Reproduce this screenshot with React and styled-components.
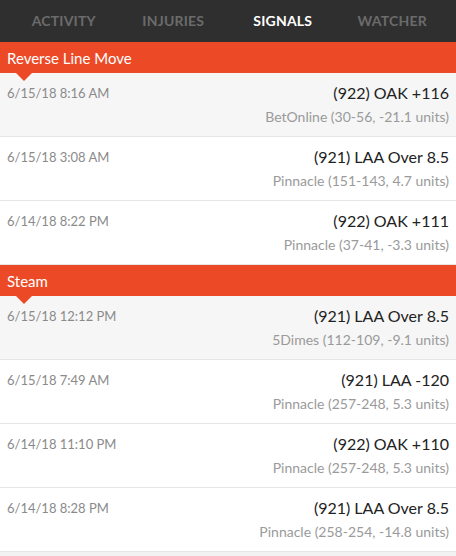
import React from "react";
import styled, { createGlobalStyle } from "styled-components";

const Global = createGlobalStyle`
  html, body { margin: 0; padding: 0; background: #f2f2f2; }
  body { font-family: "Lato", "Open Sans", sans-serif; -webkit-font-smoothing: antialiased; }
`;

const Page = styled.div`
  width: 456px;
  height: 556px;
  overflow: hidden;
  background: #f2f2f2;
`;

const TabBar = styled.nav`
  height: 42px;
  background: #2f2f2f;
  display: grid;
  grid-template-columns: repeat(4, 1fr);
  padding: 0 9px;
  box-sizing: border-box;
`;

const Tab = styled.div`
  display: flex;
  align-items: center;
  justify-content: center;
  font-size: 14px;
  font-weight: 700;
  letter-spacing: 0.2px;
  color: ${(p) => (p.$active ? "#ffffff" : "#6b6b6b")};
  text-transform: uppercase;
  padding-bottom: 2px;
`;

const SectionHeader = styled.div`
  position: relative;
  height: 31px;
  background: #ec4a26;
  color: #fff;
  font-size: 15px;
  display: flex;
  align-items: center;
  padding: 0 7px;
  z-index: 1;
  &::after {
    content: "";
    position: absolute;
    left: 16px;
    bottom: -8px;
    border-left: 8px solid transparent;
    border-right: 8px solid transparent;
    border-top: 8px solid #ec4a26;
  }
`;

const Row = styled.div`
  height: 63px;
  border-bottom: 1px solid #e6e6e6;
  background: ${(p) => (p.$highlight ? "#f6f6f6" : "#ffffff")};
  display: flex;
  justify-content: space-between;
  padding: 0 7px;
`;

const Time = styled.div`
  font-size: 13px;
  color: #8a8a8a;
  margin-top: 12px;
`;

const Right = styled.div`
  display: flex;
  flex-direction: column;
  align-items: flex-end;
  margin-top: 10px;
`;

const Pick = styled.div`
  font-size: 16px;
  color: #222;
  line-height: 20px;
`;

const Book = styled.div`
  font-size: 14px;
  color: #9a9a9a;
  line-height: 18px;
  margin-top: 5px;
`;

const sections = [
  {
    title: "Reverse Line Move",
    rows: [
      ["6/15/18 8:16 AM", "(922) OAK +116", "BetOnline (30-56, -21.1 units)"],
      ["6/15/18 3:08 AM", "(921) LAA Over 8.5", "Pinnacle (151-143, 4.7 units)"],
      ["6/14/18 8:22 PM", "(922) OAK +111", "Pinnacle (37-41, -3.3 units)"],
    ],
  },
  {
    title: "Steam",
    rows: [
      ["6/15/18 12:12 PM", "(921) LAA Over 8.5", "5Dimes (112-109, -9.1 units)"],
      ["6/15/18 7:49 AM", "(921) LAA -120", "Pinnacle (257-248, 5.3 units)"],
      ["6/14/18 11:10 PM", "(922) OAK +110", "Pinnacle (257-248, 5.3 units)"],
      ["6/14/18 8:28 PM", "(921) LAA Over 8.5", "Pinnacle (258-254, -14.8 units)"],
    ],
  },
];

export default function App() {
  return (
    <Page>
      <Global />
      <TabBar>
        <Tab>Activity</Tab>
        <Tab>Injuries</Tab>
        <Tab $active>Signals</Tab>
        <Tab>Watcher</Tab>
      </TabBar>
      {sections.map((s) => (
        <section key={s.title}>
          <SectionHeader>{s.title}</SectionHeader>
          {s.rows.map((r, i) => (
            <Row key={r[0]} $highlight={i === 0}>
              <Time>{r[0]}</Time>
              <Right>
                <Pick>{r[1]}</Pick>
                <Book>{r[2]}</Book>
              </Right>
            </Row>
          ))}
        </section>
      ))}
    </Page>
  );
}
